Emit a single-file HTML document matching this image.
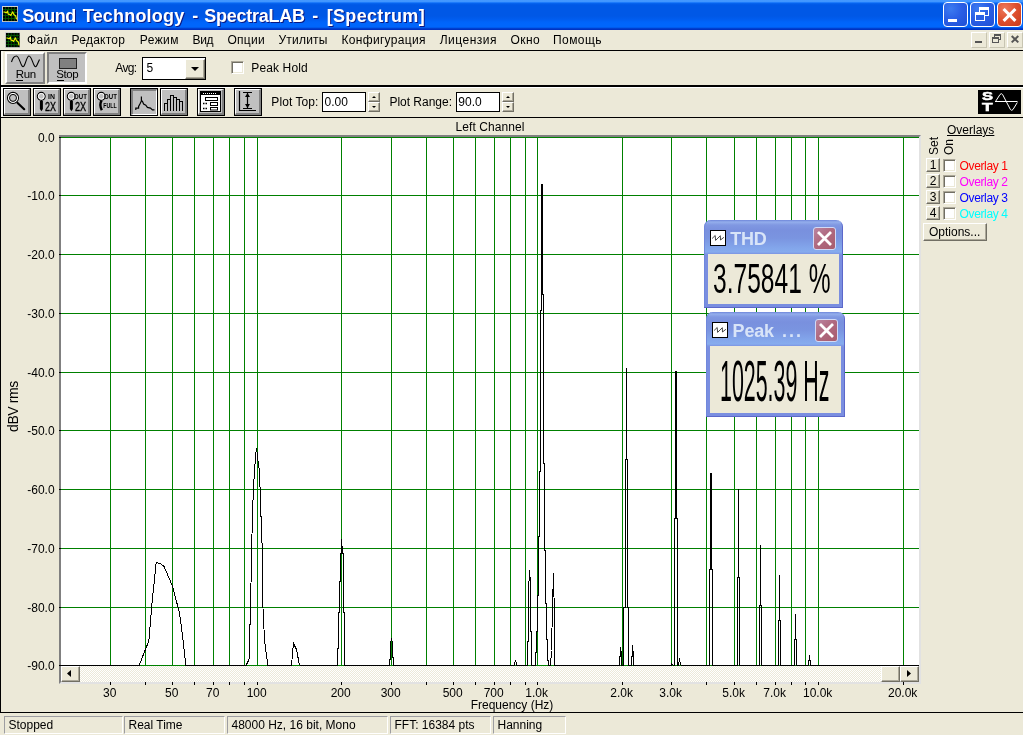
<!DOCTYPE html>
<html><head><meta charset="utf-8"><title>Sound Technology - SpectraLAB - [Spectrum]</title>
<style>
html,body{margin:0;padding:0}
body{width:1023px;height:735px;position:relative;overflow:hidden;background:#ECE9D8;font-family:"Liberation Sans",sans-serif;font-size:12px;color:#000}
.a{position:absolute;box-sizing:border-box}
.t{position:absolute;white-space:pre;line-height:1}
svg{position:absolute;overflow:visible}
.tb{position:absolute;box-sizing:border-box;width:28px;height:28px;border:1px solid #000;background:#C0C0C0}
.tb i{position:absolute;left:0;top:0;right:0;bottom:0;border-style:solid;border-width:1px 2px 2px 1px;border-color:#fff #808080 #808080 #fff}
.tb.p i{border-width:2px 1px 1px 2px;border-color:#808080 #fff #fff #808080}
.sp{position:absolute;box-sizing:border-box;background:#ECE9D8;border-style:solid;border-width:1px;border-color:#fff #716F64 #716F64 #fff;box-shadow:inset -1px -1px 0 #ACA899}
.st{position:absolute;box-sizing:border-box;height:18px;top:716px;border-style:solid;border-width:1px;border-color:#9D9DA1 #fff #fff #9D9DA1}
.cb{position:absolute;box-sizing:border-box;width:13px;height:13px;background:#fff;border-style:solid;border-width:1px;border-color:#ACA899 #fff #fff #ACA899;box-shadow:inset 1px 1px 0 #716F64, inset -1px -1px 0 #ECE9D8}
</style></head><body><div id="root" style="position:absolute;left:0;top:0;width:1023px;height:735px;will-change:transform">

<div class="a" style="left:0px;top:0px;width:1023px;height:30px;background:linear-gradient(to bottom,#4498FF 0px,#4196FF 1.6px,#1A78FA 2.6px,#0460EC 3.6px,#0058E6 5px,#0058E6 16px,#005CEE 19px,#0064FA 22px,#0066FC 24px,#0066FC 27px,#0050E0 28px,#0036C6 28.8px,#0030C0 30px)"></div>
<svg style="left:2px;top:6px;overflow:hidden" width="16" height="16" viewBox="0 0 16 16" preserveAspectRatio="none"><rect width="16" height="16" fill="#B8B8B8"/><path d="M0 16V0H16" stroke="#D8D8D8" stroke-width="1.4" fill="none"/><rect x="1" y="1" width="14" height="14" fill="#000"/><path d="M1 3.5H15M1 6.5H15M1 9.5H15M1 12.5H15M3.5 1V15M6.5 1V15M9.5 1V15M12.5 1V15" stroke="#006000" stroke-width="0.8" fill="none"/><path d="M1.6 5.8L4.5 6.8L5.5 5.1L6.2 8.1L7.8 8.4L8.8 9.4L10.7 5.8L11.7 8.4L13.7 10L14.6 13.3" stroke="#F0F000" stroke-width="1.15" fill="none" stroke-linejoin="round"/></svg>
<div class="a" style="left:943px;top:2px;width:25px;height:25px;border:1px solid #fff;border-radius:4px;background:radial-gradient(circle at 30% 25%,#3C7BF0 0%,#2A5FE6 45%,#1F4FD4 100%)"><div class="a" style="left:4px;top:16px;width:9px;height:3px;background:#fff"></div></div>
<div class="a" style="left:970px;top:2px;width:25px;height:25px;border:1px solid #fff;border-radius:4px;background:radial-gradient(circle at 30% 25%,#3C7BF0 0%,#2A5FE6 45%,#1F4FD4 100%)"><div class="a" style="left:8px;top:4px;width:10px;height:9px;border:1px solid #fff;border-top-width:3px"></div><div class="a" style="left:4px;top:9px;width:10px;height:9px;border:1px solid #fff;border-top-width:3px;background:#2A60E4"></div></div>
<div class="a" style="left:997px;top:2px;width:25px;height:25px;border:1px solid #fff;border-radius:4px;background:radial-gradient(circle at 30% 25%,#EE7A5C 0%,#DD4F2D 50%,#C6391B 100%)"><svg style="left:0;top:0" width="23" height="23"><path d="M5.6 6L17.4 17.8M17.4 6L5.6 17.8" stroke="#fff" stroke-width="3.1" fill="none"/></svg></div>
<svg style="left:4.5px;top:32px;overflow:hidden" width="15.5" height="16" viewBox="0 0 16 16" preserveAspectRatio="none"><rect width="16" height="16" fill="#B8B8B8"/><path d="M0 16V0H16" stroke="#D8D8D8" stroke-width="1.4" fill="none"/><rect x="1" y="1" width="14" height="14" fill="#000"/><path d="M1 3.5H15M1 6.5H15M1 9.5H15M1 12.5H15M3.5 1V15M6.5 1V15M9.5 1V15M12.5 1V15" stroke="#006000" stroke-width="0.8" fill="none"/><path d="M1.6 5.8L4.5 6.8L5.5 5.1L6.2 8.1L7.8 8.4L8.8 9.4L10.7 5.8L11.7 8.4L13.7 10L14.6 13.3" stroke="#F0F000" stroke-width="1.15" fill="none" stroke-linejoin="round"/></svg>
<div class="a" style="left:971px;top:32px;width:16px;height:16px;background:#ECE9D8;border-style:solid;border-width:1px;border-color:#fff #C8C5B2 #C8C5B2 #fff"><div class="a" style="left:3px;top:8px;width:7px;height:2px;background:#555"></div></div>
<div class="a" style="left:989px;top:32px;width:16px;height:16px;background:#ECE9D8;border-style:solid;border-width:1px;border-color:#fff #C8C5B2 #C8C5B2 #fff"><div class="a" style="left:4px;top:1px;width:7px;height:6px;border:1px solid #555;border-top-width:2px"></div><div class="a" style="left:2px;top:4px;width:7px;height:6px;border:1px solid #555;border-top-width:2px;background:#ECE9D8"></div></div>
<div class="a" style="left:1007px;top:32px;width:16px;height:16px;background:#ECE9D8;border-style:solid;border-width:1px;border-color:#fff #C8C5B2 #C8C5B2 #fff"><svg style="left:0;top:0" width="14" height="14"><path d="M3.7 3L10.3 9.4M10.3 3L3.7 9.4" stroke="#555" stroke-width="2" fill="none"/></svg></div>
<div class="a" style="left:0px;top:50px;width:1023px;height:1px;background:#000"></div>
<div class="a" style="left:0px;top:85px;width:1023px;height:2px;background:#000"></div>
<div class="a" style="left:0px;top:117px;width:1023px;height:1px;background:#000"></div>
<div class="a" style="left:0px;top:712px;width:1023px;height:1px;background:#000"></div>
<div class="a" style="left:0px;top:50px;width:1px;height:663px;background:#000"></div>
<div class="a" style="left:1px;top:87px;width:1022px;height:1px;background:#fff"></div>
<div class="a" style="left:1px;top:51px;width:2px;height:34px;background:#FAF9F2"></div>
<div class="a" style="left:1px;top:88px;width:2px;height:29px;background:#FAF9F2"></div>
<div class="a" style="left:5px;top:52px;width:40px;height:32px;background:#C0C0C0;border-style:solid;border-width:2px;border-color:#fff #808080 #808080 #fff"><svg style="left:-2px;top:-2px" width="40" height="32"><path d="M6.5 10 C8 4.5,10 4,11.5 4 C13.5 4,15 10,16.5 13 C17.5 15,18.5 15.5,19.5 13 C21 10,22 4,24 4 C26 4,27.5 10,29 13 C30 15,31 15.5,32 13 L34.5 7.5" stroke="#000" stroke-width="1.1" fill="none"/></svg></div>
<div class="a" style="left:16px;top:80px;width:7px;height:1px;background:#000"></div>
<div class="a" style="left:47px;top:52px;width:40px;height:32px;background:#C0C0C0;border-style:solid;border-width:2px;border-color:#808080 #fff #fff #808080"><div class="a" style="left:10px;top:4px;width:18px;height:11px;background:#808080;border:1px solid #222"></div></div>
<div class="a" style="left:57px;top:80px;width:7px;height:1px;background:#000"></div>
<div class="a" style="left:142px;top:57px;width:64px;height:23px;background:#fff;border:1px solid #000"></div>
<div class="sp" style="left:185px;top:59px;width:20px;height:20px"><svg style="left:5px;top:7px" width="8" height="4"><path d="M0 0H8L4 4Z" fill="#000"/></svg></div>
<div class="cb" style="left:231px;top:61px"></div>
<div class="tb" style="left:3px;top:88px"><i></i><svg style="left:-1px;top:-1px" width="28" height="28"><circle cx="10" cy="9.9" r="5.5" stroke="#000" stroke-width="1.1" fill="none"/><circle cx="10" cy="9.9" r="4.5" stroke="#fff" stroke-width="1" fill="none"/><circle cx="10" cy="9.9" r="3.5" stroke="#000" stroke-width="1" fill="none"/><path d="M14.6 15L21.2 21.2" stroke="#000" stroke-width="2.2" stroke-linecap="round"/></svg></div>
<div class="tb" style="left:33px;top:88px"><i></i><svg style="left:-1px;top:-1px" width="28" height="28"><circle cx="8.25" cy="8.3" r="3.9" stroke="#000" stroke-width="1.1" fill="none"/><circle cx="8.25" cy="8.3" r="2.9" stroke="#fff" stroke-width="1" fill="none"/><path d="M6.9 13H9.9V21L8.4 23.2L6.9 21Z" fill="#000"/><path d="M8.4 12V14" stroke="#000" stroke-width="1"/><text x="15.1" y="10.9" font-size="7" font-family='"Liberation Sans",sans-serif' font-weight="bold" textLength="6.9" lengthAdjust="spacingAndGlyphs">IN</text><text x="12" y="22.7" font-size="12" font-family='"Liberation Sans",sans-serif' stroke="#000" stroke-width="0.35" textLength="10.9" lengthAdjust="spacingAndGlyphs">2X</text></svg></div>
<div class="tb" style="left:63px;top:88px"><i></i><svg style="left:-1px;top:-1px" width="28" height="28"><circle cx="8.25" cy="8.3" r="3.9" stroke="#000" stroke-width="1.1" fill="none"/><circle cx="8.25" cy="8.3" r="2.9" stroke="#fff" stroke-width="1" fill="none"/><path d="M6.9 13H9.9V21L8.4 23.2L6.9 21Z" fill="#000"/><path d="M8.4 12V14" stroke="#000" stroke-width="1"/><text x="11.1" y="10.9" font-size="7" font-family='"Liberation Sans",sans-serif' font-weight="bold" textLength="12.8" lengthAdjust="spacingAndGlyphs">OUT</text><text x="12" y="22.7" font-size="12" font-family='"Liberation Sans",sans-serif' stroke="#000" stroke-width="0.35" textLength="11.2" lengthAdjust="spacingAndGlyphs">2X</text></svg></div>
<div class="tb" style="left:93px;top:88px"><i></i><svg style="left:-1px;top:-1px" width="28" height="28"><circle cx="8.25" cy="8.3" r="3.9" stroke="#000" stroke-width="1.1" fill="none"/><circle cx="8.25" cy="8.3" r="2.9" stroke="#fff" stroke-width="1" fill="none"/><path d="M8.6 12.5C7 15,7.2 19,8.8 22.3" stroke="#000" stroke-width="2.4" fill="none"/><text x="11.1" y="10.9" font-size="7" font-family='"Liberation Sans",sans-serif' font-weight="bold" textLength="12.8" lengthAdjust="spacingAndGlyphs">OUT</text><text x="10.25" y="19.9" font-size="7" font-family='"Liberation Sans",sans-serif' font-weight="bold" textLength="13.6" lengthAdjust="spacingAndGlyphs">FULL</text></svg></div>
<div class="tb p" style="left:130px;top:88px"><i></i><svg style="left:-1px;top:-1px" width="28" height="28"><path d="M5.8 22V20.1H8.6V18.5L9.9 16L11.4 12.9V8.5V12.9L12.4 13.2L13.6 16L15.8 17.2L17.4 19.4L20.5 20.1L22.4 21.9H24.5" stroke="#000" stroke-width="1.2" fill="none"/></svg></div>
<div class="tb" style="left:160px;top:88px"><i></i><svg style="left:-1px;top:-1px" width="28" height="28"><path d="M4.5 22.5V15H7.5V22.5" stroke="#000" stroke-width="1" fill="none" shape-rendering="crispEdges"/><path d="M7.5 22.5V11H10.5V22.5" stroke="#000" stroke-width="1" fill="none" shape-rendering="crispEdges"/><path d="M10.5 22.5V7.5H13.5V22.5" stroke="#000" stroke-width="1" fill="none" shape-rendering="crispEdges"/><path d="M13.5 22.5V9H16.5V22.5" stroke="#000" stroke-width="1" fill="none" shape-rendering="crispEdges"/><path d="M16.5 22.5V11.5H19.5V22.5" stroke="#000" stroke-width="1" fill="none" shape-rendering="crispEdges"/><path d="M19.5 22.5V13.5H22.5V22.5" stroke="#000" stroke-width="1" fill="none" shape-rendering="crispEdges"/></svg></div>
<div class="tb" style="left:197px;top:88px"><i></i><svg style="left:-1px;top:-1px" width="28" height="28"><rect x="3.5" y="3.5" width="20" height="20" fill="#fff" stroke="#000" stroke-width="1"/><rect x="4" y="4" width="19" height="3" fill="#000"/><path d="M6 5.5H20" stroke="#fff" stroke-width="1" stroke-dasharray="1 1"/><rect x="8.5" y="9.5" width="12" height="3" fill="#fff" stroke="#000"/><rect x="13.5" y="14.5" width="7" height="3" fill="#fff" stroke="#000"/><rect x="13.5" y="19.5" width="7" height="2.5" fill="#fff" stroke="#000"/><path d="M6 15.5H11M6 20.5H11" stroke="#000" stroke-width="1.5" stroke-dasharray="1.5 1"/></svg></div>
<div class="tb" style="left:234px;top:88px"><i></i><svg style="left:-1px;top:-1px" width="28" height="28"><path d="M5.5 3V22.5H22" stroke="#000" stroke-width="1.2" fill="none"/><path d="M9 4.5H18M9 20.5H18M13.5 5V20" stroke="#000" stroke-width="1.2"/><path d="M13.5 5L11 9H16ZM13.5 20L11 16H16Z" fill="#000"/></svg></div>
<div class="a" style="left:322px;top:92px;width:44px;height:20px;background:#fff;border:1px solid #000"></div>
<div class="sp" style="left:368px;top:92px;width:12px;height:10px"><svg style="left:3px;top:3px" width="4" height="2"><path d="M0 2H4L2 0Z" fill="#000"/></svg></div>
<div class="sp" style="left:368px;top:102px;width:12px;height:10px"><svg style="left:3px;top:3px" width="4" height="2"><path d="M0 0H4L2 2Z" fill="#000"/></svg></div>
<div class="a" style="left:456px;top:92px;width:44px;height:20px;background:#fff;border:1px solid #000"></div>
<div class="sp" style="left:502px;top:92px;width:12px;height:10px"><svg style="left:3px;top:3px" width="4" height="2"><path d="M0 2H4L2 0Z" fill="#000"/></svg></div>
<div class="sp" style="left:502px;top:102px;width:12px;height:10px"><svg style="left:3px;top:3px" width="4" height="2"><path d="M0 0H4L2 2Z" fill="#000"/></svg></div>
<div class="a" style="left:978px;top:90px;width:43px;height:24px;background:#000"><svg style="left:0;top:0" width="43" height="24"><path d="M17 11.5H39.5M17.5 11.5L22 4.5Q23.3 2.8,24.6 4.5L32.4 19.5Q33.7 21.2,35 19.5L39.3 12.5" stroke="#fff" stroke-width="1" fill="none"/></svg></div>
<div class="a" style="left:59px;top:135px;width:862px;height:549px;background:#fff;border-style:solid;border-width:2px;border-color:#808080 #E2E2E2 #E2E2E2 #808080"></div>
<svg style="left:0;top:0" width="1023" height="735" shape-rendering="crispEdges"><path d="M110.5 137V666M145.5 137V666M172.5 137V666M194.5 137V666M213.5 137V666M229.5 137V666M244.5 137V666M257.5 137V666M341.5 137V666M391.5 137V666M426.5 137V666M453.5 137V666M475.5 137V666M494.5 137V666M510.5 137V666M525.5 137V666M537.5 137V666M622.5 137V666M671.5 137V666M706.5 137V666M734.5 137V666M756.5 137V666M775.5 137V666M791.5 137V666M805.5 137V666M818.5 137V666M903.5 137V666M61 137.5H919M61 195.5H919M61 254.5H919M61 313.5H919M61 372.5H919M61 430.5H919M61 489.5H919M61 548.5H919M61 607.5H919" stroke="#008000" stroke-width="1" fill="none"/><path d="M61 665.5H919" stroke="#008000" stroke-width="1"/><path d="M59 137.5H61M59 195.5H61M59 254.5H61M59 313.5H61M59 372.5H61M59 430.5H61M59 489.5H61M59 548.5H61M59 607.5H61M59 665.5H61" stroke="#000" stroke-width="1"/><path d="M110.5 682V685M145.5 682V685M172.5 682V685M194.5 682V685M213.5 682V685M229.5 682V685M244.5 682V685M257.5 682V685M341.5 682V685M391.5 682V685M426.5 682V685M453.5 682V685M475.5 682V685M494.5 682V685M510.5 682V685M525.5 682V685M537.5 682V685M622.5 682V685M671.5 682V685M706.5 682V685M734.5 682V685M756.5 682V685M775.5 682V685M791.5 682V685M805.5 682V685M818.5 682V685M903.5 682V685" stroke="#000" stroke-width="1"/><path d="M139.2 665.5L144.0 653.0L148.9 640.7L152.0 603.0L156.2 562.5L160.0 563.5L164.0 566.4L172.4 585.9L179.6 613.3L183.0 640.0L185.9 665.5M246.1 665.5L249.0 659.3L250.6 604.5L251.5 555.7L252.5 513.8L253.5 487.1L254.5 471.9L255.5 456.7L256.5 447.7L257.5 456.7L258.5 465.2L259.5 471.0L260.5 502.4L261.5 530.0L262.5 555.6L263.0 608.4L264.5 639.7L267.8 665.5M291.5 665.5L293.4 643.2L296.5 649.5L299.5 665.5M337.5 665.5L337.5 648.0L338.5 648.0L338.5 612.0L339.5 612.0L339.5 581.0L340.5 581.0L340.5 553.0L341.5 553.0L341.5 538.6L342.5 553.0L343.5 553.0L343.5 612.0L344.5 612.0L344.5 665.5M389.5 665.5L389.5 659.5L390.5 659.5L390.5 645.0L391.5 638.0L392.5 644.0L392.5 657.0L393.5 657.0L393.5 665.5M514.3 665.5L515.5 660.0L516.8 665.5M527.5 665.5L527.5 641.0L528.5 641.0L528.5 593.3L529.5 570.1L530.5 582.9L530.5 631.4L531.5 631.4L531.5 665.5M535.5 665.5L535.5 652.0L536.5 652.0L536.5 631.0L537.5 631.0L537.5 595.0L538.5 595.0L538.5 536.0L539.5 536.0L539.5 471.0L540.5 471.0L540.5 310.0L541.5 310.0L541.5 184.0L542.5 184.0L542.5 294.0L543.5 294.0L543.5 463.0L544.5 463.0L544.5 550.0L545.5 550.0L545.5 603.0L546.5 603.0L546.5 639.0L547.5 639.0L547.5 660.0L548.5 660.0L548.5 665.5M550.5 665.5L551.5 650.5L552.5 605.7L553.5 573.3L554.5 620.0L554.5 665.5M619.5 665.5L619.5 656.0L620.5 656.0L620.5 646.6L621.5 656.0L621.5 665.5M623.5 665.5L623.5 607.0L625.5 607.0L625.5 459.0L626.5 459.0L626.5 368.0L626.5 459.0L627.5 459.0L627.5 607.0L628.5 607.0L628.5 665.5M631.5 665.5L631.5 656.0L632.5 656.0L632.5 645.0L633.5 656.0L633.5 665.5M671.5 665.5L671.5 663.0L672.5 665.5M674.5 665.5L674.5 518.0L675.5 518.0L675.5 371.0L676.5 371.0L676.5 518.0L677.5 518.0L677.5 665.5M678.5 665.5L679.5 658.0L680.5 665.5M709.5 665.5L709.5 569.0L710.5 569.0L710.5 473.0L711.5 473.0L711.5 569.0L712.5 569.0L712.5 665.5M737.5 665.5L737.5 577.5L738.5 577.5L738.5 489.0L738.5 577.5L739.5 577.5L739.5 665.5M759.5 665.5L759.5 605.0L760.5 605.0L760.5 544.5L760.5 605.0L761.5 605.0L761.5 665.5M778.5 665.5L778.5 620.5L779.5 620.5L779.5 575.0L779.5 620.5L780.5 620.5L780.5 665.5M794.5 665.5L794.5 639.5L795.5 639.5L795.5 614.0L795.5 639.5L796.5 639.5L796.5 665.5M808.5 665.5L808.5 660.5L809.5 660.5L809.5 655.0L809.5 660.5L810.5 660.5L810.5 665.5M61.0 665.5H139.2M185.9 665.5H246.1M267.8 665.5H291.5M299.5 665.5H337.5M344.5 665.5H389.5M393.5 665.5H514.3M516.8 665.5H527.5M531.5 665.5H535.5M548.5 665.5H550.5M554.5 665.5H619.5M621.5 665.5H623.5M628.5 665.5H631.5M633.5 665.5H671.5M672.5 665.5H674.5M677.5 665.5H678.5M680.5 665.5H709.5M712.5 665.5H737.5M739.5 665.5H759.5M761.5 665.5H778.5M780.5 665.5H794.5M796.5 665.5H808.5M810.5 665.5H919" stroke="#000" stroke-width="1" fill="none" stroke-linejoin="miter"/></svg>
<svg style="left:61px;top:666px" width="858" height="16"><defs><pattern id="ck" width="2" height="2" patternUnits="userSpaceOnUse"><rect width="2" height="2" fill="#fff"/><rect width="1" height="1" fill="#ECE9D8"/><rect x="1" y="1" width="1" height="1" fill="#ECE9D8"/></pattern></defs><rect width="858" height="16" fill="url(#ck)"/></svg>
<div class="sp" style="left:61px;top:666px;width:19px;height:16px"><svg style="left:5px;top:3px" width="4" height="7"><path d="M4 0V7L0 3.5Z" fill="#000"/></svg></div>
<div class="sp" style="left:900px;top:666px;width:19px;height:16px"><svg style="left:6px;top:3px" width="4" height="7"><path d="M0 0V7L4 3.5Z" fill="#000"/></svg></div>
<div class="sp" style="left:881px;top:666px;width:19px;height:16px"></div>
<div class="t" style="left:6.4px;top:432.4px;font-size:14px;letter-spacing:-0.4px;transform-origin:0 0;transform:rotate(-90deg)">dBV rms</div>
<div class="t" style="left:927.5px;top:154.5px;font-size:12px;transform-origin:0 0;transform:rotate(-90deg)">Set</div>
<div class="t" style="left:942.5px;top:154.5px;font-size:12px;transform-origin:0 0;transform:rotate(-90deg)">On</div>
<div class="sp" style="left:926px;top:158px;width:14px;height:14px"></div>
<div class="cb" style="left:943px;top:159px"></div>
<div class="sp" style="left:926px;top:174px;width:14px;height:14px"></div>
<div class="cb" style="left:943px;top:175px"></div>
<div class="sp" style="left:926px;top:190px;width:14px;height:14px"></div>
<div class="cb" style="left:943px;top:191px"></div>
<div class="sp" style="left:926px;top:206px;width:14px;height:14px"></div>
<div class="cb" style="left:943px;top:207px"></div>
<div class="sp" style="left:923px;top:223px;width:64px;height:18px"></div>
<div class="a" style="left:704px;top:220px;width:139px;height:88px;border-radius:7px 7px 0 0;background:linear-gradient(to bottom,#6E86DA 0px,#94AEEC 2px,#8098E2 5px,#7990DE 10px,#7A94E0 18px,#82A4EA 27px,#86ACEE 32px,#7C94E2 34px,#7A8EE0 36px,#7A8EE0 100%);box-shadow:inset -1px -1px 0 #5C68CA,inset 1px 0 0 #7088DC"><div class="a" style="left:4px;top:34px;width:131px;height:50px;background:#ECE9D8"></div><div class="a" style="left:6px;top:10px;width:16px;height:16px;background:#fff;border:1px solid #000"><svg style="left:0;top:0" width="14" height="14"><path d="M1.1 7.5L4.2 4.5L4.6 9.4L9.3 4.7L9.5 9L12.9 6.3" stroke="#333" stroke-width="0.9" fill="none"/></svg></div><div class="a" style="left:109px;top:7px;width:23px;height:23px;border-radius:3px;border:1px solid #D2DAF6;background:linear-gradient(135deg,#BA86A2 0%,#B06A80 45%,#A85C6E 100%)"><svg style="left:0;top:0" width="21" height="21"><path d="M4 4L17 17M17 4L4 17" stroke="#fff" stroke-width="2.8" fill="none"/></svg></div></div>
<div class="a" style="left:706px;top:312px;width:139px;height:105px;border-radius:7px 7px 0 0;background:linear-gradient(to bottom,#6E86DA 0px,#94AEEC 2px,#8098E2 5px,#7990DE 10px,#7A94E0 18px,#82A4EA 27px,#86ACEE 32px,#7C94E2 34px,#7A8EE0 36px,#7A8EE0 100%);box-shadow:inset -1px -1px 0 #5C68CA,inset 1px 0 0 #7088DC"><div class="a" style="left:4px;top:34px;width:131px;height:67px;background:#ECE9D8"></div><div class="a" style="left:6px;top:10px;width:16px;height:16px;background:#fff;border:1px solid #000"><svg style="left:0;top:0" width="14" height="14"><path d="M1.1 7.5L4.2 4.5L4.6 9.4L9.3 4.7L9.5 9L12.9 6.3" stroke="#333" stroke-width="0.9" fill="none"/></svg></div><div class="a" style="left:109px;top:7px;width:23px;height:23px;border-radius:3px;border:1px solid #D2DAF6;background:linear-gradient(135deg,#BA86A2 0%,#B06A80 45%,#A85C6E 100%)"><svg style="left:0;top:0" width="21" height="21"><path d="M4 4L17 17M17 4L4 17" stroke="#fff" stroke-width="2.8" fill="none"/></svg></div></div>
<div class="t" style="left:713.3px;top:258.25px;font-size:42px;transform-origin:0 0;transform:scaleX(0.5850)">3.75841 %</div>
<div class="t" style="left:719.8px;top:351.90px;font-size:58px;transform-origin:0 0;transform:scaleX(0.3688)">1025.39 Hz</div>
<div class="st" style="left:4px;width:119px"></div>
<div class="st" style="left:124px;width:101px"></div>
<div class="st" style="left:227px;width:161px"></div>
<div class="st" style="left:390px;width:101px"></div>
<div class="st" style="left:493px;width:73px"></div>
<div class="t" style="left:22.20px;top:6.56px;font-size:18px;letter-spacing:-0.480px;font-weight:bold;color:#fff;text-shadow:1px 1px 0 #0A1883">Sound</div>
<div class="t" style="left:82.80px;top:6.56px;font-size:18px;letter-spacing:0.193px;font-weight:bold;color:#fff;text-shadow:1px 1px 0 #0A1883">Technology</div>
<div class="t" style="left:192.20px;top:6.56px;font-size:18px;letter-spacing:1.300px;font-weight:bold;color:#fff;text-shadow:1px 1px 0 #0A1883">-</div>
<div class="t" style="left:204.20px;top:6.56px;font-size:18px;letter-spacing:-0.233px;font-weight:bold;color:#fff;text-shadow:1px 1px 0 #0A1883">SpectraLAB</div>
<div class="t" style="left:312.30px;top:6.56px;font-size:18px;letter-spacing:1.400px;font-weight:bold;color:#fff;text-shadow:1px 1px 0 #0A1883">-</div>
<div class="t" style="left:326.70px;top:6.56px;font-size:18px;letter-spacing:0.328px;font-weight:bold;color:#fff;text-shadow:1px 1px 0 #0A1883">[Spectrum]</div>
<div class="t" style="left:26.90px;top:34.04px;font-size:12px;letter-spacing:0.396px;">Файл</div>
<div class="t" style="left:71.60px;top:34.04px;font-size:12px;letter-spacing:0.230px;">Редактор</div>
<div class="t" style="left:139.80px;top:34.04px;font-size:12px;letter-spacing:0.420px;">Режим</div>
<div class="t" style="left:192.50px;top:34.04px;font-size:12px;letter-spacing:-0.306px;">Вид</div>
<div class="t" style="left:227.50px;top:34.04px;font-size:12px;letter-spacing:0.255px;">Опции</div>
<div class="t" style="left:278.40px;top:34.04px;font-size:12px;letter-spacing:0.235px;">Утилиты</div>
<div class="t" style="left:341.50px;top:34.04px;font-size:12px;letter-spacing:0.306px;">Конфигурация</div>
<div class="t" style="left:439.70px;top:34.04px;font-size:12px;letter-spacing:0.509px;">Лицензия</div>
<div class="t" style="left:510.60px;top:34.04px;font-size:12px;letter-spacing:0.402px;">Окно</div>
<div class="t" style="left:553.00px;top:34.04px;font-size:12px;letter-spacing:0.440px;">Помощь</div>
<div class="t" style="left:15.80px;top:69.27px;font-size:11.5px;letter-spacing:-0.436px;">Run</div>
<div class="t" style="left:56.30px;top:69.27px;font-size:11.5px;letter-spacing:-0.418px;">Stop</div>
<div class="t" style="left:115.20px;top:61.54px;font-size:12px;letter-spacing:-0.599px;">Avg:</div>
<div class="t" style="left:146.50px;top:61.84px;font-size:12px;">5</div>
<div class="t" style="left:251.30px;top:61.54px;font-size:12px;letter-spacing:0.125px;">Peak Hold</div>
<div class="t" style="left:271.30px;top:96.14px;font-size:12px;letter-spacing:0.080px;">Plot Top:</div>
<div class="t" style="left:324.60px;top:96.34px;font-size:12px;">0.00</div>
<div class="t" style="left:389.40px;top:96.14px;font-size:12px;letter-spacing:-0.011px;">Plot Range:</div>
<div class="t" style="left:458.30px;top:96.34px;font-size:12px;">90.0</div>
<div class="t" style="left:981.50px;top:91.29px;font-size:11px;font-weight:bold;color:#fff;transform:scaleX(1.5);transform-origin:left;-webkit-text-stroke:0.5px #fff">S</div>
<div class="t" style="left:981.70px;top:101.69px;font-size:11px;font-weight:bold;color:#fff;transform:scaleX(1.58);transform-origin:left;-webkit-text-stroke:0.5px #fff">T</div>
<div class="t" style="left:37.91px;top:132.04px;font-size:12px;">0.0</div>
<div class="t" style="left:27.24px;top:190.04px;font-size:12px;">-10.0</div>
<div class="t" style="left:27.24px;top:249.04px;font-size:12px;">-20.0</div>
<div class="t" style="left:27.24px;top:308.04px;font-size:12px;">-30.0</div>
<div class="t" style="left:27.24px;top:367.04px;font-size:12px;">-40.0</div>
<div class="t" style="left:27.24px;top:425.04px;font-size:12px;">-50.0</div>
<div class="t" style="left:27.24px;top:484.04px;font-size:12px;">-60.0</div>
<div class="t" style="left:27.24px;top:543.04px;font-size:12px;">-70.0</div>
<div class="t" style="left:27.24px;top:602.04px;font-size:12px;">-80.0</div>
<div class="t" style="left:27.24px;top:660.04px;font-size:12px;">-90.0</div>
<div class="t" style="left:103.02px;top:686.74px;font-size:12px;">30</div>
<div class="t" style="left:165.02px;top:686.74px;font-size:12px;">50</div>
<div class="t" style="left:206.02px;top:686.74px;font-size:12px;">70</div>
<div class="t" style="left:246.68px;top:686.74px;font-size:12px;">100</div>
<div class="t" style="left:330.68px;top:686.74px;font-size:12px;">200</div>
<div class="t" style="left:380.68px;top:686.74px;font-size:12px;">300</div>
<div class="t" style="left:442.68px;top:686.74px;font-size:12px;">500</div>
<div class="t" style="left:483.68px;top:686.74px;font-size:12px;">700</div>
<div class="t" style="left:525.36px;top:686.74px;font-size:12px;">1.0k</div>
<div class="t" style="left:610.36px;top:686.74px;font-size:12px;">2.0k</div>
<div class="t" style="left:659.36px;top:686.74px;font-size:12px;">3.0k</div>
<div class="t" style="left:722.36px;top:686.74px;font-size:12px;">5.0k</div>
<div class="t" style="left:763.36px;top:686.74px;font-size:12px;">7.0k</div>
<div class="t" style="left:803.02px;top:686.74px;font-size:12px;">10.0k</div>
<div class="t" style="left:888.02px;top:686.74px;font-size:12px;">20.0k</div>
<div class="t" style="left:470.66px;top:699.04px;font-size:12px;">Frequency (Hz)</div>
<div class="t" style="left:455.50px;top:120.64px;font-size:12px;letter-spacing:0.078px;">Left Channel</div>
<div class="t" style="left:947.00px;top:124.14px;font-size:12px;text-decoration:underline">Overlays</div>
<div class="t" style="left:929.70px;top:158.74px;font-size:12px;">1</div>
<div class="t" style="left:959.60px;top:159.64px;font-size:12px;letter-spacing:-0.373px;color:#FF0000">Overlay 1</div>
<div class="t" style="left:929.70px;top:174.74px;font-size:12px;">2</div>
<div class="t" style="left:959.60px;top:175.64px;font-size:12px;letter-spacing:-0.373px;color:#FF00FF">Overlay 2</div>
<div class="t" style="left:929.70px;top:190.74px;font-size:12px;">3</div>
<div class="t" style="left:959.60px;top:191.64px;font-size:12px;letter-spacing:-0.373px;color:#0000FF">Overlay 3</div>
<div class="t" style="left:929.70px;top:206.74px;font-size:12px;">4</div>
<div class="t" style="left:959.60px;top:207.64px;font-size:12px;letter-spacing:-0.373px;color:#00FFFF">Overlay 4</div>
<div class="t" style="left:929.00px;top:225.84px;font-size:12px;">Options...</div>
<div class="t" style="left:730.20px;top:230.16px;font-size:18px;letter-spacing:-0.200px;font-weight:bold;color:#D8E4F8">THD</div>
<div class="t" style="left:732.60px;top:322.16px;font-size:18px;letter-spacing:-0.212px;font-weight:bold;color:#D8E4F8">Peak</div>
<div class="t" style="left:782.00px;top:322.16px;font-size:18px;letter-spacing:1.995px;font-weight:bold;color:#D8E4F8">...</div>
<div class="t" style="left:8.50px;top:718.64px;font-size:12px;">Stopped</div>
<div class="t" style="left:128.50px;top:718.64px;font-size:12px;">Real Time</div>
<div class="t" style="left:231.50px;top:718.64px;font-size:12px;">48000 Hz, 16 bit, Mono</div>
<div class="t" style="left:394.50px;top:718.64px;font-size:12px;">FFT: 16384 pts</div>
<div class="t" style="left:497.50px;top:718.64px;font-size:12px;">Hanning</div>
</div></body></html>
